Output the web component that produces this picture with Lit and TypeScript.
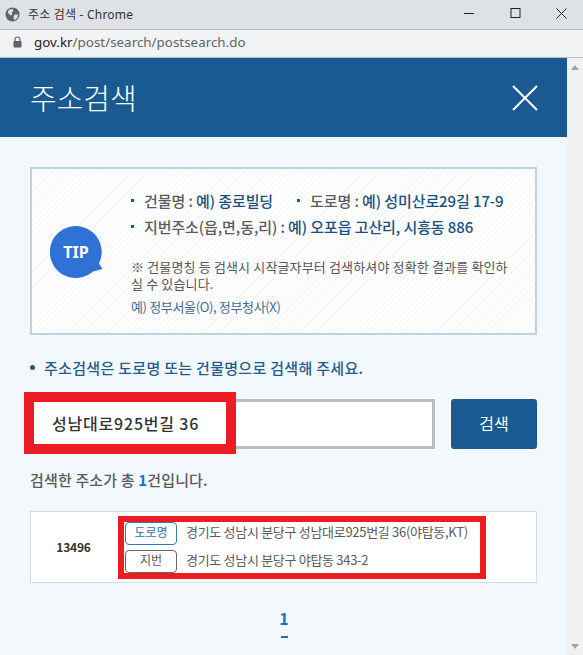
import { LitElement, html, css } from "lit";
import { customElement } from "lit/decorators.js";

@customElement("app-root")
export class AppRoot extends LitElement {
  static styles = css`
    :host { display: block; width: 583px; height: 655px; overflow: hidden; position: relative;
      font-family: "Noto Sans CJK KR", "Noto Sans", sans-serif; background: #f3f8fc; }
    * { box-sizing: border-box; }
    .titlebar { height: 30px; background: #dee1e6; border-bottom: 1px solid #b4b7bb; display: flex; align-items: center; padding-left: 5px; font-family: "Noto Sans", "Noto Sans CJK KR", sans-serif; font-size: 12px; color: #333; }
    .titlebar .t { margin-left: 8px; flex: 1; letter-spacing: .2px; padding-bottom: 2px; }
    .winbtns { display: flex; }
    .winbtns svg { width: 47px; height: 29px; display: block; }
    .addr { height: 28px; background: #f1f3f4; border-bottom: 1px solid #b9bcc0; display: flex; align-items: center; padding: 0 0 3px 13px; font-family: "Noto Sans", sans-serif; font-size: 13.4px; color: #5f6368; }
    .addr b { font-weight: 400; color: #202124; }
    .addr svg { margin-right: 12px; }
    .main { display: flex; height: 597px; }
    .content { width: 567px; }
    .scroll { width: 16px; background: #f1f1f1; display: flex; flex-direction: column; justify-content: space-between; align-items: center; padding: 7px 0 6px; }
    .head { height: 79px; background: #1a5a93; display: flex; align-items: center; justify-content: space-between; padding: 0 29px 0 30px; color: #fff; font-size: 29px; font-weight: 300; }
    .head span { padding-bottom: 2px; }
    .body { padding: 30px 30px 0; }
    .tip { height: 168px; border: 2px solid #bdd3e2; display: flex; background-color: #fff;
      background-image: repeating-linear-gradient(135deg, #f3f5f7 0 1px, #fff 1px 4px); }
    .bubble { width: 100px; flex: none; padding: 57px 0 0 18px; }
    .bubble svg { display: block; }
    .tiptext { padding-top: 18px; flex: 1; margin-left: -1px; }
    .line { display: flex; height: 26px; align-items: center; font-size: 15px; font-weight: 500; color: #5a5a5a; letter-spacing: -.1px; white-space: nowrap; }
    .line i { font-style: normal; color: #1a4f7f; }
    .dot { width: 3px; height: 3px; background: #1a5a93; margin-right: 10px; flex: none; }
    .sp { width: 24px; }
    .note { margin: 19px 0 0; font-size: 13px; line-height: 17px; color: #555; letter-spacing: .15px; width: 378px; font-weight: 400; }
    .note2 { margin-top: 5px; font-size: 13px; line-height: 20px; color: #3f6a90; letter-spacing: -0.35px; font-weight: 400; }
    .guide { margin-top: 22px; height: 20px; display: flex; align-items: center; font-size: 15px; font-weight: 500; color: #1f5d8f; letter-spacing: .3px; }
    .guide span { width: 5px; height: 5px; border-radius: 50%; background: #1a5a93; margin-right: 9px; }
    .search { display: flex; margin-top: 22px; gap: 16px; }
    .input { width: 405px; height: 50px; border: 3px solid #bbb; background: #fff; }
    .btn { width: 86px; height: 50px; border-radius: 3px; background: #1a5a93; color: #fff; font-size: 16px; display: flex; align-items: center; justify-content: center; padding-bottom: 2px; }
    .count { margin-top: 20px; height: 22px; padding-bottom: 2px; font-size: 15px; font-weight: 500; color: #5a5a5a; letter-spacing: .15px; display: flex; align-items: center; white-space: pre; }
    .count b { color: #1a74b8; font-weight: 700; }
    .table { margin-top: 20px; height: 72px; background: #fff; border: 1px solid #d3dbe3; display: flex; align-items: center; }
    .zip { width: 85px; text-align: center; font-size: 12px; font-weight: 700; color: #333; flex: none; letter-spacing: -.2px; padding-bottom: 2px; }
    .rows { padding-left: 9px; display: flex; flex-direction: column; gap: 5px; }
    .row { display: flex; align-items: center; font-size: 13px; color: #5a5a5a; letter-spacing: -0.3px; }
    .row .a { padding-bottom: 4px; }
    .badge { width: 52px; height: 23px; border: 1px solid #666; border-radius: 4px; display: flex; align-items: center; justify-content: center; margin-right: 9px; letter-spacing: 0; flex: none; font-size: 12px; padding-bottom: 3px; }
    .badge.road { border-color: #2c7fb0; color: #1f76ae; }
    .pager { margin-top: 23px; padding-left: 1px; display: flex; flex-direction: column; align-items: center; color: #1a74b8; font-size: 16px; font-weight: 700; }
    .pager span { width: 7px; height: 2px; background: #1a74b8; margin-top: 6px; }
    .mark { position: absolute; border-style: solid; border-color: #ed1c24; background: #fff; display: flex; align-items: center; }
    .mark.m1 { left: 24px; top: 392px; width: 212px; height: 62px; border-width: 10px; padding-left: 18px; font-size: 16px; font-weight: 500; color: #333; letter-spacing: .8px; }
    .mark.m2 { left: 118px; top: 516px; width: 368px; height: 63px; border-width: 6px; background: transparent; }
  `;

  render() {
    return html`
      <div class="titlebar">
        <svg width="15" height="15" viewBox="0 0 16 16"><circle cx="8" cy="8" r="7.5" fill="#5f6368"/><path d="M4 3l4-1 1 2-2 2 1 2-2 1-3-3zM10 8l4 0-1 4-3 2-1-3z" fill="#dee1e6"/></svg>
        <span class="t">주소 검색 - Chrome</span>
        <div class="winbtns">
          <svg viewBox="0 0 47 29"><path d="M22 13.5h10" stroke="#222" fill="none"/></svg>
          <svg viewBox="0 0 47 29"><rect x="22" y="8.5" width="9" height="9" stroke="#222" fill="none"/></svg>
          <svg viewBox="0 0 47 29"><path d="M20.5 8.5l10 10M30.5 8.5l-10 10" stroke="#222" fill="none"/></svg>
        </div>
      </div>
      <div class="addr">
        <svg width="9" height="12" viewBox="0 0 9 12"><path d="M2 5V3.5a2.5 2.5 0 0 1 5 0V5" stroke="#5f6368" fill="none" stroke-width="1.2"/><rect x="0.5" y="5" width="8" height="6.5" rx="1" fill="#5f6368"/></svg>
        <span><b>gov.kr</b>/post/search/postsearch.do</span>
      </div>
      <div class="main">
        <div class="content">
          <div class="head">
            <span>주소검색</span>
            <svg width="26" height="26" viewBox="0 0 26 26"><path d="M1 1l24 24M25 1L1 25" stroke="#fff" stroke-width="2" fill="none"/></svg>
          </div>
          <div class="body">
            <div class="tip">
              <div class="bubble">
                <svg width="54" height="54" viewBox="0 0 54 54"><path d="M26 0a26 26 0 1 0 17 45.500l9.500-2.500-3.500-5.500A26 26 0 0 0 26 0z" fill="#2f72d6"/><text x="26" y="32" text-anchor="middle" fill="#fff" font-size="16" font-weight="700" font-family="Noto Sans">TIP</text></svg>
              </div>
              <div class="tiptext">
                <div class="line"><span class="dot"></span>건물명 : <i>&nbsp;예) 종로빌딩</i><span class="sp"></span><span class="dot"></span>도로명 : <i>&nbsp;예) 성미산로29길 17-9</i></div>
                <div class="line"><span class="dot"></span>지번주소(읍,면,동,리) : <i>&nbsp;예) 오포읍 고산리, 시흥동 886</i></div>
                <div class="note">※ 건물명칭 등 검색시 시작글자부터 검색하셔야 정확한 결과를 확인하실 수 있습니다.</div>
                <div class="note2">예) 정부서울(O), 정부청사(X)</div>
              </div>
            </div>
            <div class="guide"><span></span>주소검색은 도로명 또는 건물명으로 검색해 주세요.</div>
            <div class="search"><div class="input"></div><div class="btn">검색</div></div>
            <div class="count">검색한 주소가 총 <b>1</b>건입니다.</div>
            <div class="table">
              <div class="zip">13496</div>
              <div class="rows">
                <div class="row"><span class="badge road">도로명</span><span class="a">경기도 성남시 분당구 성남대로925번길 36(야탑동,KT)</span></div>
                <div class="row"><span class="badge">지번</span><span class="a">경기도 성남시 분당구 야탑동 343-2</span></div>
              </div>
            </div>
            <div class="pager">1<span></span></div>
          </div>
        </div>
        <div class="scroll">
          <svg width="8" height="5" viewBox="0 0 8 5"><path d="M4 0l4 5H0z" fill="#a3a3a3"/></svg>
          <svg width="8" height="5" viewBox="0 0 8 5"><path d="M0 0h8L4 5z" fill="#a3a3a3"/></svg>
        </div>
      </div>
      <div class="mark m1">성남대로925번길 36</div>
      <div class="mark m2"></div>
    `;
  }
}
